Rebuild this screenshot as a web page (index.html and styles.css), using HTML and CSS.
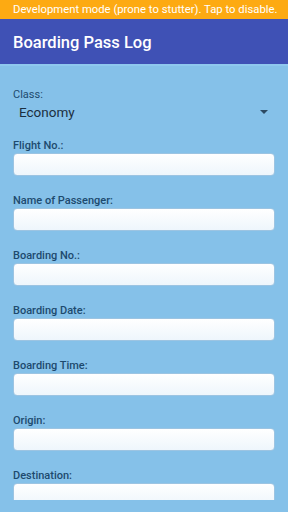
FILE: index.html
```html
<!DOCTYPE html>
<html lang="en">
<head>
    <meta charset="UTF-8">
    <meta name="viewport" content="width=device-width, initial-scale=1.0">
    <title>Boarding Pass Log</title>
    <link rel="stylesheet" href="styles.css">
</head>
<body>
    <div class="app">
        <div class="dev-banner">Development mode (prone to stutter). Tap to disable.</div>
        <div class="app-bar">
            <h1>Boarding Pass Log</h1>
        </div>

        <div class="content">
            <div class="field class-field">
                <label class="class-label">Class:</label>
                <div class="select">
                    <span>Economy</span>
                    <span class="arrow"></span>
                </div>
            </div>

            <div class="field">
                <label>Flight No.:</label>
                <input class="text-input" type="text">
            </div>
            <div class="field">
                <label>Name of Passenger:</label>
                <input class="text-input" type="text">
            </div>
            <div class="field">
                <label>Boarding No.:</label>
                <input class="text-input" type="text">
            </div>
            <div class="field">
                <label>Boarding Date:</label>
                <input class="text-input" type="text">
            </div>
            <div class="field">
                <label>Boarding Time:</label>
                <input class="text-input" type="text">
            </div>
            <div class="field">
                <label>Origin:</label>
                <input class="text-input" type="text">
            </div>
            <div class="field">
                <label>Destination:</label>
                <input class="text-input" type="text">
            </div>
        </div>
    </div>
</body>
</html>
```

FILE: styles.css
```css
* {
    margin: 0;
    padding: 0;
    box-sizing: border-box;
}

body {
    font-family: Roboto, 'Noto Sans', sans-serif;
    background: #85c1e9;
    width: 288px;
    height: 512px;
    overflow: hidden;
}

.app {
    height: 512px;
    display: flex;
    flex-direction: column;
}

.dev-banner {
    height: 19px;
    background: #fdaa12;
    color: #fff;
    font-size: 11.3px;
    line-height: 19px;
    padding-left: 13px;
    white-space: nowrap;
}

.app-bar {
    height: 45px;
    background: #3f51b5;
    color: #fff;
    display: flex;
    align-items: center;
    padding-left: 13px;
    border-bottom: 2px solid #8fc8ee;
    box-sizing: content-box;
}

.app-bar h1 {
    font-size: 16.5px;
    font-weight: 500;
    padding-top: 2px;
}

.content {
    height: 434px;
    overflow: hidden;
    padding: 22px 13px 0;
}

.field {
    display: flex;
    flex-direction: column;
    margin-bottom: 18px;
}

.field label {
    font-size: 11px;
    font-weight: 500;
    line-height: 14px;
    color: #1d4a6e;
}

.class-field label {
    font-weight: 400;
}

.select {
    height: 19px;
    display: flex;
    align-items: center;
    justify-content: space-between;
    padding: 0 7px 0 6px;
    font-size: 13.5px;
    color: #1b2f40;
}

.arrow {
    width: 0;
    height: 0;
    border-left: 4px solid transparent;
    border-right: 4px solid transparent;
    border-top: 4px solid #2c4a63;
}

.text-input {
    height: 23px;
    width: 100%;
    border: 1px solid #9cc4e2;
    border-radius: 4px;
    background: linear-gradient(#ffffff, #eef6fc);
    font-family: inherit;
    font-size: 13px;
    padding: 0 6px;
    outline: none;
}
```
